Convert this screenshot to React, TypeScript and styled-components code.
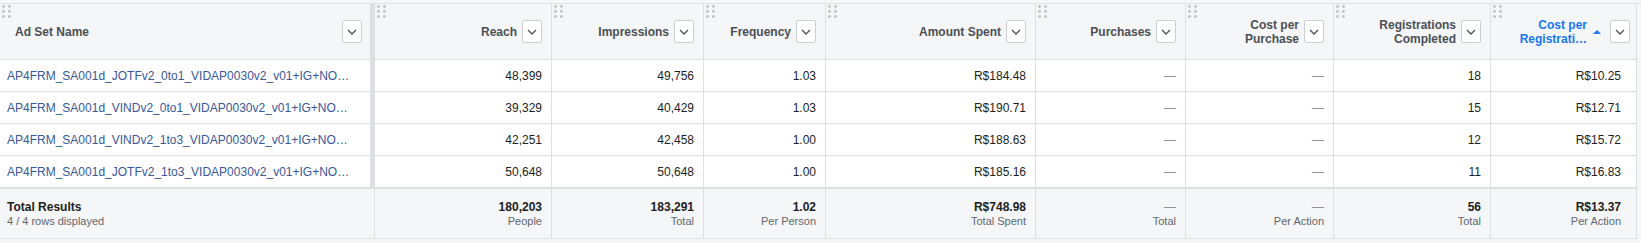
import { FC, ReactNode } from "react";
import styled, { createGlobalStyle } from "styled-components";

const GlobalStyle = createGlobalStyle`
  body {
    margin: 0;
    background: #f5f6f7;
    font-family: "Liberation Sans", Arial, sans-serif;
    font-size: 12px;
    color: #1c1e21;
  }
`;

const COLUMNS = [375, 177, 152, 122, 210, 150, 148, 157, 146];
const BORDER = "#dddfe2";

const Page = styled("div")`
  padding-top: 3px;
`;

const Table = styled("div")`
  display: grid;
  grid-template-columns: ${COLUMNS.map((w) => `${w}px`).join(" ")};
  border-top: 1px solid ${BORDER};
`;

const HeaderCell = styled("div")<{ $frozen?: boolean; $last?: boolean }>`
  position: relative;
  box-sizing: border-box;
  height: 56px;
  display: flex;
  align-items: center;
  justify-content: ${({ $frozen }) => ($frozen ? "space-between" : "flex-end")};
  gap: 5px;
  padding: 0 ${({ $frozen, $last }) => ($frozen ? 8 : $last ? 6 : 9)}px 0 15px;
  background: #f5f6f7;
  border-bottom: 1px solid ${BORDER};
  border-right: ${({ $frozen }) => ($frozen ? 5 : 1)}px solid ${BORDER};
`;

const HeaderLabel = styled("div")<{ $active?: boolean }>`
  text-align: right;
  line-height: 14px;
  font-weight: 700;
  color: ${({ $active }) => ($active ? "#1877f2" : "#4b4f56")};
  white-space: nowrap;
`;

const DragHandle = styled("svg")`
  position: absolute;
  top: 1px;
  left: 2px;
`;

const SortArrow = styled("span")`
  width: 0;
  height: 0;
  margin: 0 4px 0 1px;
  border-left: 4px solid transparent;
  border-right: 4px solid transparent;
  border-bottom: 4px solid #1877f2;
`;

const MenuButton = styled("button")`
  flex: none;
  box-sizing: border-box;
  width: 20px;
  height: 23px;
  padding: 0;
  display: flex;
  align-items: center;
  justify-content: center;
  background: #fff;
  border: 1px solid #ccd0d5;
  border-radius: 2px;
`;

const Cell = styled("div")<{ $frozen?: boolean; $last?: boolean }>`
  box-sizing: border-box;
  height: 32px;
  display: flex;
  align-items: center;
  justify-content: ${({ $frozen }) => ($frozen ? "flex-start" : "flex-end")};
  padding: 0 ${({ $last }) => ($last ? 15 : 9)}px 0 7px;
  background: #fff;
  border-bottom: 1px solid ${BORDER};
  border-right: ${({ $frozen }) => ($frozen ? 5 : 1)}px solid ${BORDER};
  white-space: nowrap;
  overflow: hidden;
`;

const NameLink = styled("a")`
  color: #385898;
  text-decoration: none;
  cursor: pointer;
`;

const Empty = styled("span")`
  color: #90949c;
`;

const FooterCell = styled("div")<{ $frozen?: boolean; $last?: boolean }>`
  box-sizing: border-box;
  height: 51px;
  display: flex;
  flex-direction: column;
  justify-content: center;
  align-items: ${({ $frozen }) => ($frozen ? "flex-start" : "flex-end")};
  padding: 0 ${({ $last }) => ($last ? 15 : 9)}px 0 7px;
  background: #f5f6f7;
  border-top: 1px solid ${BORDER};
  border-bottom: 1px solid ${BORDER};
  border-right: 1px solid ${BORDER};
  line-height: 14px;
  white-space: nowrap;
`;

const FooterValue = styled("div")<{ $muted?: boolean }>`
  font-weight: ${({ $muted }) => ($muted ? 400 : 700)};
  color: ${({ $muted }) => ($muted ? "#90949c" : "#1c1e21")};
`;

const FooterSub = styled("div")`
  font-size: 11px;
  color: #606770;
`;

const Dots: FC = () => (
  <DragHandle width="9" height="13" viewBox="0 0 9 13" fill="#bec3c9">
    {[1.5, 7.5].map((cx) =>
      [1.5, 6.5, 11.5].map((cy) => <circle key={`${cx}-${cy}`} cx={cx} cy={cy} r="1.4" />)
    )}
  </DragHandle>
);

const Chevron: FC = () => (
  <svg width="10" height="6" viewBox="0 0 10 6">
    <path d="M1 1l4 4 4-4" fill="none" stroke="#4b4f56" strokeWidth="1.3" />
  </svg>
);

type Column = { label: string[]; sorted?: boolean };

const columns: Column[] = [
  { label: ["Ad Set Name"] },
  { label: ["Reach"] },
  { label: ["Impressions"] },
  { label: ["Frequency"] },
  { label: ["Amount Spent"] },
  { label: ["Purchases"] },
  { label: ["Cost per", "Purchase"] },
  { label: ["Registrations", "Completed"] },
  { label: ["Cost per", "Registrati…"], sorted: true },
];

const rows: string[][] = [
  ["AP4FRM_SA001d_JOTFv2_0to1_VIDAP0030v2_v01+IG+NO…", "48,399", "49,756", "1.03", "R$184.48", "—", "—", "18", "R$10.25"],
  ["AP4FRM_SA001d_VINDv2_0to1_VIDAP0030v2_v01+IG+NO…", "39,329", "40,429", "1.03", "R$190.71", "—", "—", "15", "R$12.71"],
  ["AP4FRM_SA001d_VINDv2_1to3_VIDAP0030v2_v01+IG+NO…", "42,251", "42,458", "1.00", "R$188.63", "—", "—", "12", "R$15.72"],
  ["AP4FRM_SA001d_JOTFv2_1to3_VIDAP0030v2_v01+IG+NO…", "50,648", "50,648", "1.00", "R$185.16", "—", "—", "11", "R$16.83"],
];

const totals: [string, string][] = [
  ["180,203", "People"],
  ["183,291", "Total"],
  ["1.02", "Per Person"],
  ["R$748.98", "Total Spent"],
  ["—", "Total"],
  ["—", "Per Action"],
  ["56", "Total"],
  ["R$13.37", "Per Action"],
];

const lines = (parts: string[]): ReactNode =>
  parts.map((p, i) => (
    <span key={p}>
      {i > 0 && <br />}
      {p}
    </span>
  ));

const App: FC = () => {
  const last = columns.length - 1;
  return (
    <Page>
      <GlobalStyle />
      <Table>
        {columns.map((col, i) => (
          <HeaderCell key={col.label.join(" ")} $frozen={i === 0} $last={i === last}>
            <Dots />
            <HeaderLabel $active={col.sorted}>{lines(col.label)}</HeaderLabel>
            {col.sorted && <SortArrow />}
            <MenuButton aria-label="Column options">
              <Chevron />
            </MenuButton>
          </HeaderCell>
        ))}

        {rows.map((row) =>
          row.map((value, i) => (
            <Cell key={`${row[0]}-${i}`} $frozen={i === 0} $last={i === last}>
              {i === 0 ? (
                <NameLink>{value}</NameLink>
              ) : value === "—" ? (
                <Empty>{value}</Empty>
              ) : (
                value
              )}
            </Cell>
          ))
        )}

        <FooterCell $frozen>
          <FooterValue>Total Results</FooterValue>
          <FooterSub>4 / 4 rows displayed</FooterSub>
        </FooterCell>
        {totals.map(([value, sub], i) => (
          <FooterCell key={i} $last={i + 1 === last}>
            <FooterValue $muted={value === "—"}>{value}</FooterValue>
            <FooterSub>{sub}</FooterSub>
          </FooterCell>
        ))}
      </Table>
    </Page>
  );
};

export default App;
